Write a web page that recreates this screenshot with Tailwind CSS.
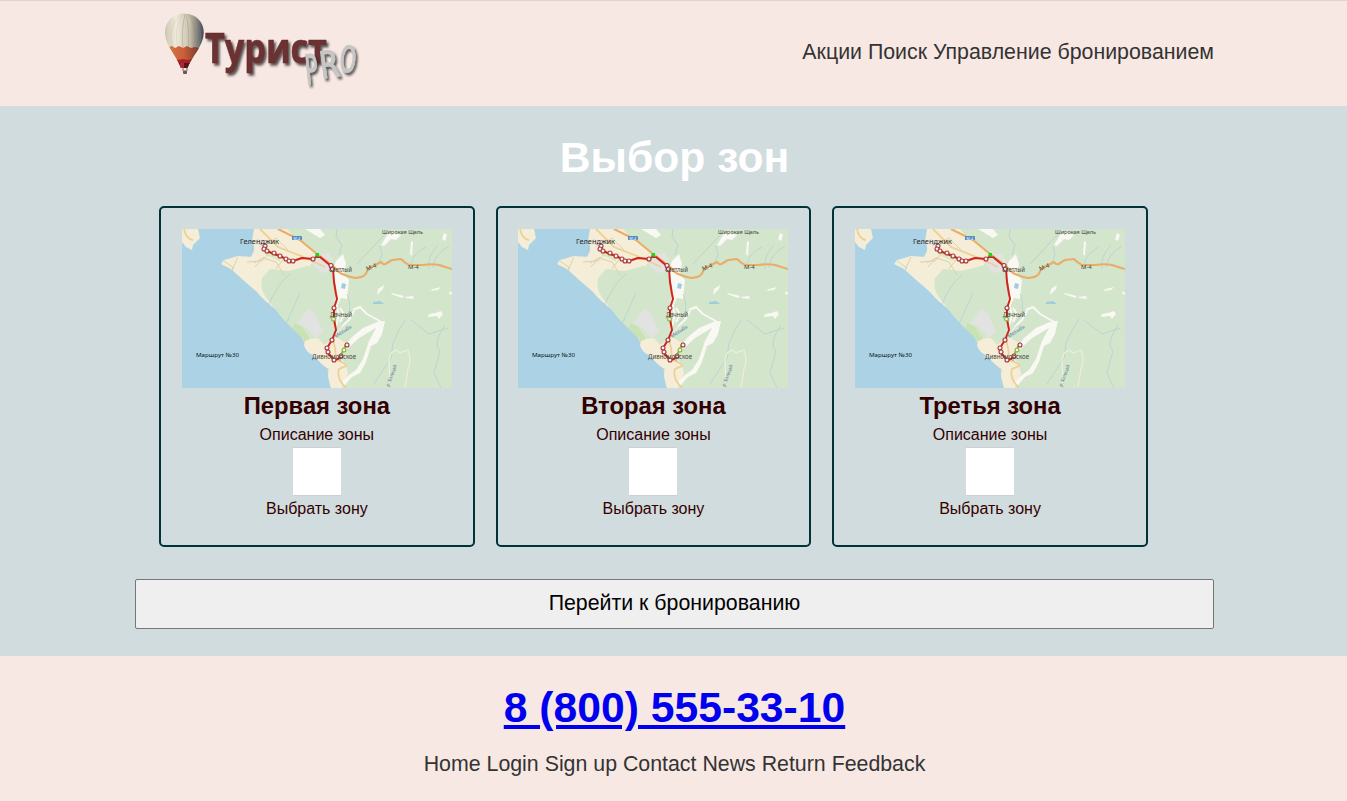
<!DOCTYPE html>
<html lang="ru">
<head>
<meta charset="utf-8">
<title>Турист PRO</title>
<script src="https://cdn.jsdelivr.net/npm/@tailwindcss/browser@4"></script>
</head>
<body class="h-[801px] overflow-hidden bg-[#f7e8e3] font-['Liberation_Sans',Arial,sans-serif] text-[#333]">
<header class="flex h-[106px] justify-center border-t border-[#e3d2ce] pl-[2px]">
  <div class="flex w-[1079px] items-start justify-between">
    <svg class="ml-[25px] h-[100px] w-[210px]" viewBox="160 1 210 100" role="img">
      <defs>
        <linearGradient id="silk" x1="0" x2="1"><stop offset="0" stop-color="#c9c3af"/><stop offset=".3" stop-color="#efeada"/><stop offset=".62" stop-color="#c9c2ad"/><stop offset=".82" stop-color="#817f79"/><stop offset="1" stop-color="#323f58"/></linearGradient>
        <linearGradient id="flame" x1="0" x2="1"><stop offset="0" stop-color="#db7d4c"/><stop offset=".5" stop-color="#c95e38"/><stop offset="1" stop-color="#592d2c"/></linearGradient>
        <filter id="shade" x="-20%" y="-20%" width="150%" height="160%"><feDropShadow dx="2" dy="2.5" stdDeviation="1.3" flood-color="#222" flood-opacity=".75"/></filter>
        <clipPath id="envelope"><path d="M184 13.500C172 13.500 164.500 23 165 34C165.500 45 176 55 181 68H187.500C192 56 203.500 46 203.800 33C204 22 196 13.500 184 13.500Z"/></clipPath>
      </defs>
      <g clip-path="url(#envelope)">
        <path fill="url(#silk)" d="M164 13h41v57h-41z"/>
        <g fill="none" stroke="#8c8775" stroke-width=".8" opacity=".45"><path d="M185 14Q181 30 183 49M186 14Q190 30 188 49M188 14Q199 28 193 49M189 14Q206 28 198 49"/></g>
        <g fill="none" stroke="#8c8775" stroke-width=".7" opacity=".2"><path d="M181 14Q166 28 173 49M183 14Q173 28 178 49"/></g>
        <path fill="url(#flame)" d="M165 46l4 1 3-1 3 2 4-2 4 2 4-2 4 2 4-1 4 1 6-2v25h-42z"/>
        <path fill="#a91f2b" d="M172 58l6 2 5-1 5 1 8-2v6h-24z"/><path fill="#521620" d="M174 63h21v8h-21z"/><path fill="#b32630" d="M180 63h4v6h-4z"/>
      </g>
      <path d="M183 68v3M187 68v3" stroke="#8b3434" stroke-width=".8"/><rect x="183" y="70.500" width="4" height="3.500" rx="1" fill="#6b5753"/>
      <g filter="url(#shade)"><text x="205" y="63" textLength="122" lengthAdjust="spacingAndGlyphs" font-family="Open Sans, sans-serif" font-weight="700" font-size="41.500" fill="#6b3030" stroke="#6b3030" stroke-width=".6">Турист</text></g>
      <g filter="url(#shade)" fill="#c6c6c6" stroke="#c6c6c6" stroke-width="1.100" font-family="DejaVu Sans, sans-serif">
        <text transform="translate(306.500 84.500) rotate(-6) scale(.52 1)" font-size="41">P</text>
        <text transform="translate(321.500 78.500) rotate(-8) scale(.76 1)" font-size="37">R</text>
        <text transform="translate(338.500 71) rotate(6) scale(.58 1)" font-size="36">O</text>
      </g>
    </svg>
    <nav class="mt-[39px] text-[21.33px] leading-[25px] whitespace-nowrap"><a>Акции</a> <a>Поиск</a> <a>Управление</a> <a>бронированием</a></nav>
  </div>
</header>
<main class="flex h-[550px] flex-col items-center bg-[#d1dcde]">
  <h1 class="mt-[26px] h-[50px] pl-[2px] text-[42.66px] leading-[50px] font-bold text-white">Выбор зон</h1>
  <div class="mt-[24px] flex w-[80%] gap-[21.1px] pl-[24.4px]">
    <article class="flex h-[341px] w-[315.500px] shrink-0 flex-col items-center rounded-[5px] border-2 border-[#003238] pt-[21px] text-[#300]">
      <svg class="map block h-[159px] w-[270px]" viewBox="0 0 270 159">
        <rect width="270" height="159" fill="#abd3e5"/>
        <path fill="#f4eed9" d="M0 0H16L18 9 11 16 10 21 4 18 0 13ZM72 0H125L145 30 120 55 96 82Q82 72 75 63L60 50 49 40 39 35 42 31 56 27 71 28 74 22 70 12Z"/>
        <path fill="#d3e5cb" d="M103 0H270V159H149Q145 147 146 140 136 132 130 125 123 116 118 106 104 95 93 80L84 68Q78 61 80 49L88 40 106 42 123 38 135 25Z"/>
        <path fill="#f5edd7" d="M72 0H105L120 19 134 28 128 37 114 37 98 39 83 39 65 36 72 22ZM124 110L136 109 142 116 154 108 164 114 157 127 164 135 166 145 160 159H149L146 147 147 140Q139 136 134 128Q123 123 122 116Z"/>
        <path fill="#e2e2e1" d="M115 94L127 79 134 86 141 103 134 109 122 97ZM134 26L147 24 151 32 148 43 138 44 131 36ZM75 9l7 5-4 5-4-7z"/>
        <path fill="#c9e2b2" d="M112 94l8 4 8 12-5 2-8-8-4-5z"/>
        <g fill="#faf8f3"><path d="M154 32l7-7 3 10-2 10 5 6-2 19-6-1-5 11-2-1 2-23-4-12zM123 0h15l5 6-5 3zM205 6l6-3 8 3-5 5-5-1-7 7-3-1zM262 4l3 2-2 6-3-2zM229 12l2 1-1 14-2-2zM196 60l6-4-1 4-6 6zM210 64l12 3-2 2-11-4zM223 68l8-1 1 3-8-1zM251 60l8-2-3 3-8 1zM268 62l4 4-5-1zM247 85l6-1 6-2 2 3-4 5-2-3-9 1zM203 92l-3 13-5 9-6 3-5 16-6 11-8 4-8 9-4-2 9-9 7-5 7-11 6-18 7-13-17 10-13 12-3-1 8-11 12-10 14-6z"/></g>
        <path fill="none" stroke="#faf8f3" stroke-width="2" stroke-linejoin="round" d="M154 74l3 12-4 15M171 81l7-3 7 7 9 5 7 4M172 82l-5 9-7 6-6 8M158 79l4 6-4 8"/>
        <g fill="none" stroke="#b1ccd5" stroke-width="1"><path d="M155 0l-1 8 6 8-3 10M198 17l2 9-4 10M251 38q2-13 16-21M205 3L175 35" opacity=".75"/><path d="M230 40q-3-14 14-22M247 40q-2-13 9-24M165 65q4 8 2 19l-16 27M85 80q9-24 23-35M104 95l14-31M224 90q-7 10-13 24l-2 15-17 26M229 91l18 14 19-6M263 96q-13 19-5 26l-6 22 7 15" opacity=".65"/></g>
        <g fill="#9fcddf"><path d="M160 54l4 1-1 5-4-1zM191 73l7-1 4 3-11 0z"/></g>
        <g fill="none" stroke="#ddd2ab"><path d="M72 34l9-5 13 4 8 13M42 32l10 7-2 2M56 28l-6 13M82 28L73 38M103 28L94 40M65 33l15-1 8-9 9 2M86 14l8-5 12 12"/></g>
        <path fill="none" stroke="#edd096" stroke-width="1.800" d="M2 0Q4 10 11 11M78 0l18 18 28 11 19 9M151 111q4 12 2 20 12 3 11 6l-7 3q-3 9 7 19"/>
        <path fill="none" stroke="#e9ae64" stroke-width="2.100" stroke-linejoin="round" d="M96 0l22 11 17 14 15 11 8 8q8 4 15 5 6 0 10-3l4-7 12-6q3 4 6 1l5-3 9-1q4 4 8 6l13 0q14-2 20 1l10 3"/>
        <path fill="none" stroke="#cde6b4" stroke-width="5" opacity=".7" d="M84 23l15 7"/>
        <path fill="none" stroke="#f0eee4" stroke-width="1.100" d="M207 131l2-7 5-3 4 3 8-3q4 11 0 19l-3 18M207 131l1 26"/>
        <path fill="none" stroke="#cf2419" stroke-width="2" stroke-linejoin="round" d="M82 18l3 4 7 3 6 2 6 3 5 2 5-1 6-2 11 1 3-2 4 0 11 9 2 3 1 13 2 12 1 5-3 9 0 11 2 11-4 10-5 8 1 5 6 7 4-1 3-3"/>
        <path fill="none" stroke="#8db94b" stroke-width="2" d="M159 126l6-12"/>
        <g fill="#f8f1ee" stroke="#a7353a" stroke-width="1.100"><circle cx="83" cy="17" r="2"/><circle cx="82" cy="20" r="2"/><circle cx="85" cy="22" r="2"/><circle cx="92" cy="24" r="2"/><circle cx="98" cy="27" r="2"/><circle cx="104" cy="30" r="2"/><circle cx="107" cy="32" r="2"/><circle cx="111" cy="32" r="2"/><circle cx="131" cy="30" r="2"/><circle cx="149" cy="36.500" r="2"/><circle cx="150.500" cy="40" r="2"/><circle cx="152" cy="79" r="2"/><circle cx="150" cy="111" r="2"/><circle cx="145" cy="119" r="2"/><circle cx="146" cy="123" r="2"/><circle cx="152" cy="131" r="2"/><circle cx="159" cy="127" r="2"/><circle cx="165" cy="116" r="2"/></g>
        <g fill="#f4f8df" stroke="#8db94b" stroke-width="1.200"><circle cx="151.500" cy="90" r="1.900"/><circle cx="162" cy="121" r="1.900"/></g>
        <path fill="#1ed522" d="M134 24h3v3h1v1l-5-1z"/>
        <rect x="110" y="7" width="10" height="4" rx=".5" fill="#568cc4"/>
        <g font-family="Noto Sans, sans-serif" fill="#454541">
          <text x="111.500" y="10.500" font-size="3.600" fill="#fff">М-4</text>
          <text x="58" y="14.500" textLength="39" lengthAdjust="spacingAndGlyphs" font-size="7.300" fill="#222">Геленджик</text>
          <text x="200" y="5" textLength="41" lengthAdjust="spacingAndGlyphs" font-size="6">Широкая Щель</text>
          <text x="147" y="43" textLength="23" lengthAdjust="spacingAndGlyphs" font-size="6.200">Светлый</text>
          <text x="148" y="88" textLength="22" lengthAdjust="spacingAndGlyphs" font-size="6.200">Дачный</text>
          <text x="130" y="130" textLength="44" lengthAdjust="spacingAndGlyphs" font-size="6.700">Дивноморское</text>
          <text transform="translate(185 42) rotate(-22)" font-size="6">М-4</text><text x="226" y="40" font-size="6">М-4</text>
          <text transform="translate(154 109) rotate(-33)" font-size="5" fill="#56839d">Мезыбь</text>
          <text transform="translate(207 158) rotate(-70)" font-size="5" textLength="23" fill="#56839d">р. Хотецай</text>
          <text x="14" y="127.500" textLength="43" lengthAdjust="spacingAndGlyphs" font-size="6" fill="#111">Маршрут №30</text>
        </g>
      </svg>
      <h2 class="mt-[4px] text-[23.8px] leading-[28px] font-bold">Первая зона</h2>
      <p class="mt-[5px] text-[16px] leading-[20px]">Описание зоны</p>
      <button class="mt-[2px] h-[49px] w-[48px] shrink-0 border-y border-[#ccd0d0] bg-white" aria-label="Выбрать"></button>
      <p class="mt-[3px] text-[16px] leading-[20px]">Выбрать зону</p>
    </article>
    <article class="flex h-[341px] w-[315.500px] shrink-0 flex-col items-center rounded-[5px] border-2 border-[#003238] pt-[21px] text-[#300]">
      <div class="map-slot h-[159px] w-[270px]"></div>
      <h2 class="mt-[4px] text-[23.8px] leading-[28px] font-bold">Вторая зона</h2>
      <p class="mt-[5px] text-[16px] leading-[20px]">Описание зоны</p>
      <button class="mt-[2px] h-[49px] w-[48px] shrink-0 border-y border-[#ccd0d0] bg-white" aria-label="Выбрать"></button>
      <p class="mt-[3px] text-[16px] leading-[20px]">Выбрать зону</p>
    </article>
    <article class="flex h-[341px] w-[315.500px] shrink-0 flex-col items-center rounded-[5px] border-2 border-[#003238] pt-[21px] text-[#300]">
      <div class="map-slot h-[159px] w-[270px]"></div>
      <h2 class="mt-[4px] text-[23.8px] leading-[28px] font-bold">Третья зона</h2>
      <p class="mt-[5px] text-[16px] leading-[20px]">Описание зоны</p>
      <button class="mt-[2px] h-[49px] w-[48px] shrink-0 border-y border-[#ccd0d0] bg-white" aria-label="Выбрать"></button>
      <p class="mt-[3px] text-[16px] leading-[20px]">Выбрать зону</p>
    </article>
  </div>
  <button class="mt-[32px] ml-[2px] h-[50px] w-[1079px] shrink-0 rounded-[2px] border border-[#767676] bg-[#efefef] pb-[2px] text-[21.33px] leading-[25px] text-black">Перейти к бронированию</button>
</main>
<footer class="flex flex-col items-center pl-[2px]">
  <a class="mt-[26px] text-[42.66px] leading-[50px] font-bold text-[#0000ee] underline decoration-[4px] underline-offset-[3px]" href="#">8 (800) 555-33-10</a>
  <nav class="mt-[20px] text-[21.33px] leading-[25px]"><a>Home</a> <a>Login</a> <a>Sign up</a> <a>Contact</a> <a>News</a> <a>Return</a> <a>Feedback</a></nav>
</footer>
<script>
const map = document.querySelector('.map');
document.querySelectorAll('.map-slot').forEach(slot => slot.append(map.cloneNode(true)));
</script>
</body>
</html>
